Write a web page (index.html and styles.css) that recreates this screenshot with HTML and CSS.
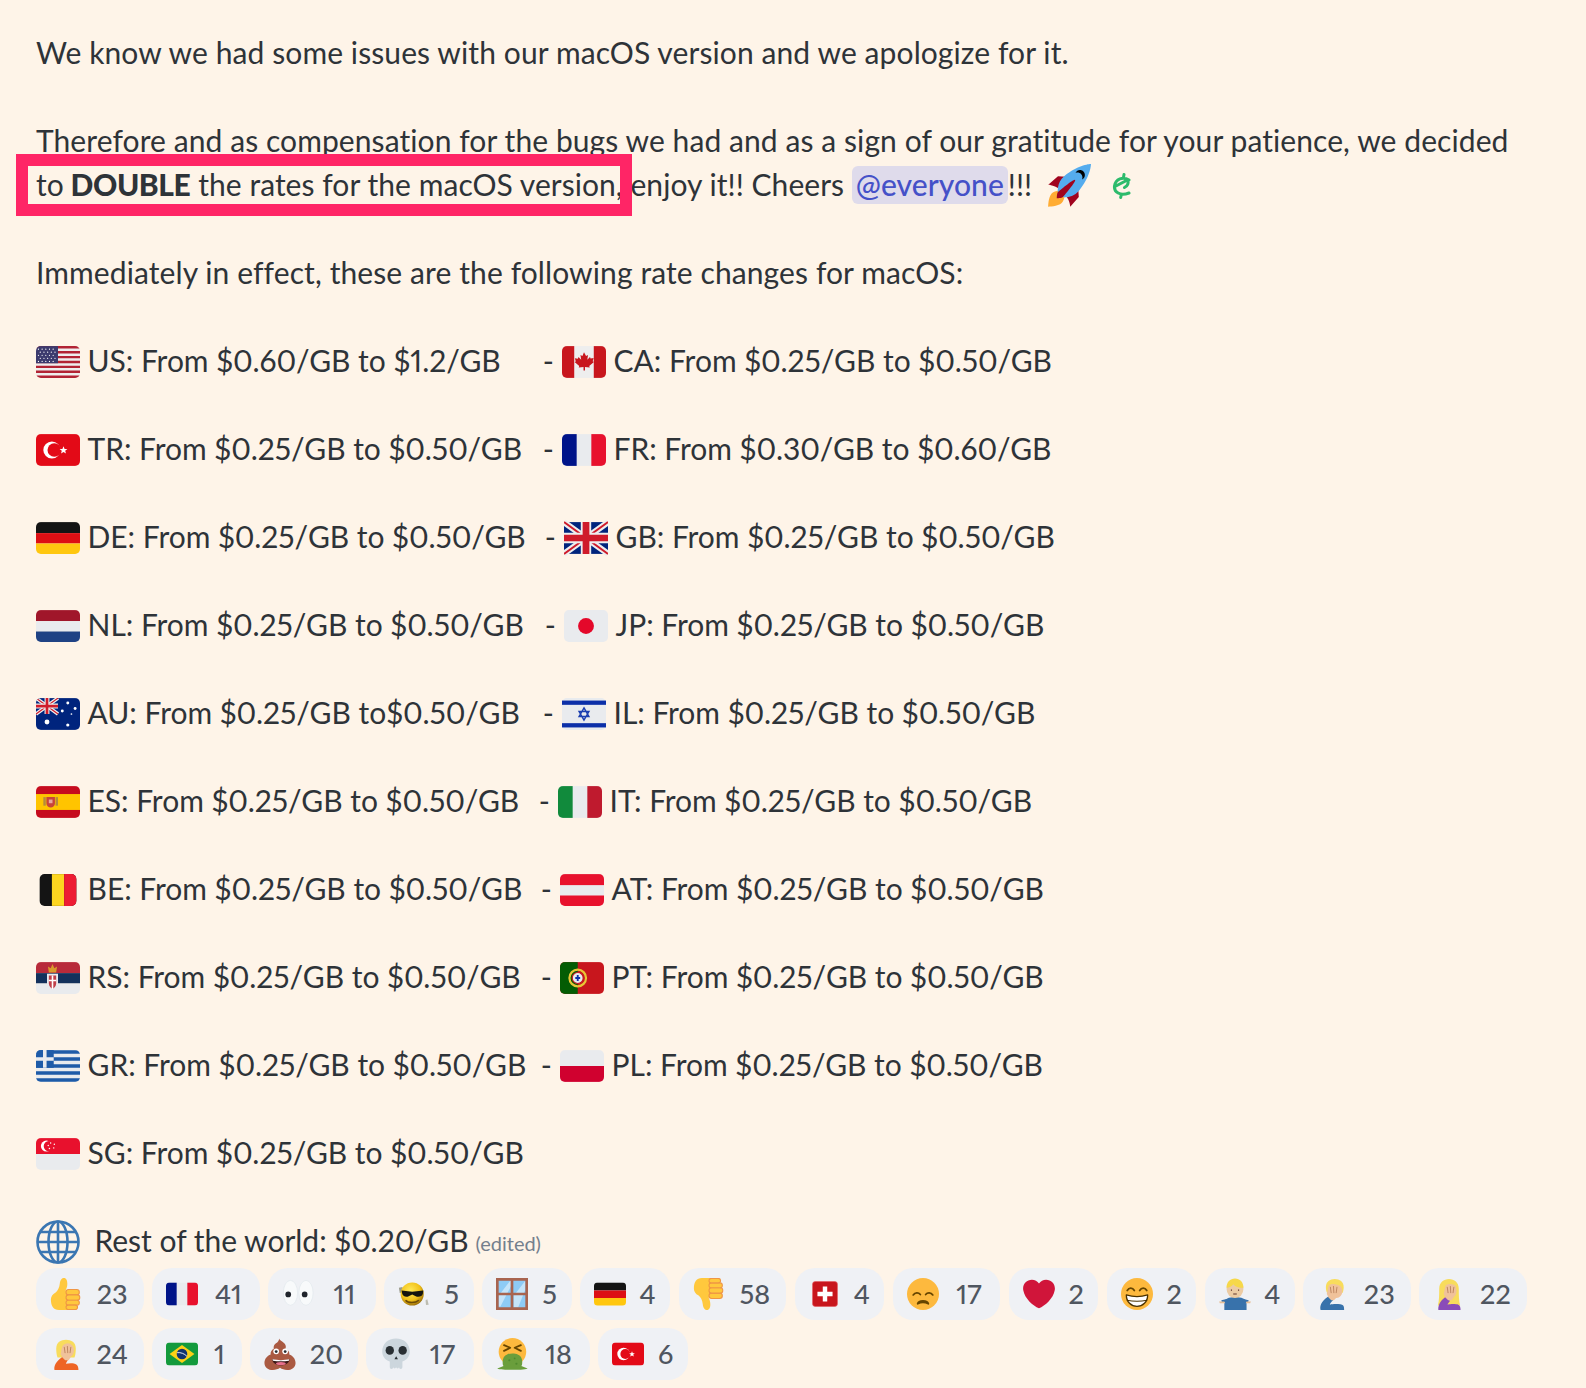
FILE: index.html
```html
<!DOCTYPE html>
<html lang="en">
<head>
<meta charset="utf-8">
<title>Message</title>
<link rel="stylesheet" href="styles.css">
</head>
<body>
<svg class="sprite" aria-hidden="true">
<defs>
<clipPath id="fc"><rect x="0" y="5" width="36" height="26" rx="4"/></clipPath>
<radialGradient id="sun" cx=".42" cy=".35" r=".7"><stop offset="0" stop-color="#ffe95a"/><stop offset=".6" stop-color="#f2c21a"/><stop offset="1" stop-color="#8f6306"/></radialGradient>

<symbol id="f-us" viewBox="0 0 36 36"><g clip-path="url(#fc)"><rect y="5" width="36" height="26" fill="#eee"/><path d="M0 6h36M0 10h36M0 14h36M0 18h36M0 22h36M0 26h36M0 30h36" stroke="#b22334" stroke-width="2"/><rect y="5" width="18" height="14" fill="#3c3b6e"/><path d="M2 7.5h15M3.5 10h13M2 12.5h15M3.5 15h13M2 17.5h15" stroke="#fff" stroke-width="1" stroke-linecap="round" stroke-dasharray=".01 3"/></g></symbol>

<symbol id="f-ca" viewBox="0 0 36 36"><g clip-path="url(#fc)"><rect y="5" width="36" height="26" fill="#eee"/><rect y="5" width="10" height="26" fill="#c8161d"/><rect x="26" y="5" width="10" height="26" fill="#c8161d"/><path d="M18 10l1.7 3 1.6-.8-.6 3.9 2.2-2.2.5 1.3 2.5-.4-.8 2.6 1 .6-3.8 3.2.4 1.3-3.9-.5V25h-1.2v-2.9l-3.9.5.4-1.3-3.8-3.2 1-.6-.8-2.6 2.5.4.5-1.3 2.2 2.2-.6-3.9 1.6.8z" fill="#c8161d"/></g></symbol>

<symbol id="f-tr" viewBox="0 0 36 36"><g clip-path="url(#fc)"><rect y="5" width="36" height="26" fill="#e30a17"/><circle cx="13" cy="18" r="7" fill="#fff"/><circle cx="15" cy="18" r="5.6" fill="#e30a17"/><path d="M22.5 15l.9 2.2 2.3-.1-1.8 1.5.6 2.3-2-1.3-2 1.3.6-2.3-1.8-1.5 2.3.1z" fill="#fff"/></g></symbol>

<symbol id="f-fr" viewBox="0 0 36 36"><g clip-path="url(#fc)"><rect y="5" width="36" height="26" fill="#e9ebee"/><rect y="5" width="12" height="26" fill="#001489"/><rect x="24" y="5" width="12" height="26" fill="#e8112d"/></g></symbol>

<symbol id="f-de" viewBox="0 0 36 36"><g clip-path="url(#fc)"><rect y="5" width="36" height="9" fill="#141414"/><rect y="14" width="36" height="8.5" fill="#dd0f14"/><rect y="22.5" width="36" height="9" fill="#ffc70f"/></g></symbol>

<symbol id="f-gb" viewBox="0 0 36 36"><rect y="5" width="36" height="26" fill="#00247d"/><path d="M0 5l36 26M36 5L0 31" stroke="#eee" stroke-width="5"/><path d="M0 5l36 26M36 5L0 31" stroke="#cf1b2b" stroke-width="1.6"/><path d="M18 5v26M0 18h36" stroke="#eee" stroke-width="8.5"/><path d="M18 5v26M0 18h36" stroke="#cf1b2b" stroke-width="5.5"/></symbol>

<symbol id="f-nl" viewBox="0 0 36 36"><g clip-path="url(#fc)"><rect y="5" width="36" height="9" fill="#a0162a"/><rect y="14" width="36" height="8.5" fill="#e9ebee"/><rect y="22.5" width="36" height="9" fill="#1f4284"/></g></symbol>

<symbol id="f-jp" viewBox="0 0 36 36"><rect y="5" width="36" height="26" rx="4" fill="#e9ebee"/><circle cx="18" cy="18" r="6.5" fill="#e4082a"/></symbol>

<symbol id="f-au" viewBox="0 0 36 36"><g clip-path="url(#fc)"><rect y="5" width="36" height="26" fill="#00247d"/><path d="M0 5l18 13M18 5L0 18" stroke="#eee" stroke-width="3"/><path d="M0 5l18 13M18 5L0 18" stroke="#cf1b2b" stroke-width="1"/><path d="M9 5v13M0 11.5h18" stroke="#eee" stroke-width="4"/><path d="M9 5v13M0 11.5h18" stroke="#cf1b2b" stroke-width="2.2"/><g fill="#fff"><circle cx="9" cy="24.5" r="2"/><circle cx="26" cy="9" r="1.2"/><circle cx="26" cy="27" r="1.3"/><circle cx="21.5" cy="15.5" r="1.2"/><circle cx="32" cy="13.5" r="1.2"/><circle cx="29" cy="18" r=".7"/></g></g></symbol>

<symbol id="f-il" viewBox="0 0 36 36"><rect y="5" width="36" height="26" rx="4" fill="#e9ebee"/><rect y="7" width="36" height="3.5" fill="#0b2fa8"/><rect y="25.5" width="36" height="3.5" fill="#0b2fa8"/><path d="M18 13l4 7h-8zM18 23l-4-7h8z" fill="none" stroke="#1c3fb0" stroke-width="1.2"/></symbol>

<symbol id="f-es" viewBox="0 0 36 36"><g clip-path="url(#fc)"><rect y="5" width="36" height="26" fill="#c60b1e"/><rect y="11.5" width="36" height="13" fill="#ffc400"/><rect x="6" y="14" width="2" height="7" fill="#b58b3c"/><rect x="16" y="14" width="2" height="7" fill="#b58b3c"/><path d="M8.5 14h7v5a3.5 3.5 0 0 1-7 0z" fill="#c8443a"/><rect x="10.5" y="16" width="3" height="3" fill="#e8a7a0"/></g></symbol>

<symbol id="f-it" viewBox="0 0 36 36"><g clip-path="url(#fc)"><rect y="5" width="36" height="26" fill="#e9ebee"/><rect y="5" width="12" height="26" fill="#118a3c"/><rect x="24" y="5" width="12" height="26" fill="#bf1a2e"/></g></symbol>

<symbol id="f-be" viewBox="0 0 36 36"><rect x="3" y="5" width="30" height="26" rx="4" fill="#141414"/><rect x="13" y="5" width="10" height="26" fill="#fdd520"/><path d="M23 5h6a4 4 0 0 1 4 4v18a4 4 0 0 1-4 4h-6z" fill="#ed1c33"/></symbol>

<symbol id="f-at" viewBox="0 0 36 36"><g clip-path="url(#fc)"><rect y="5" width="36" height="26" fill="#e9ebee"/><rect y="5" width="36" height="9" fill="#e8112d"/><rect y="22.5" width="36" height="9" fill="#e8112d"/></g></symbol>

<symbol id="f-rs" viewBox="0 0 36 36"><g clip-path="url(#fc)"><rect y="5" width="36" height="9" fill="#b82a3a"/><rect y="14" width="36" height="8.5" fill="#13315c"/><rect y="22.5" width="36" height="9" fill="#e9ebee"/><path d="M9 14.5h9v8c0 3-2.5 5-4.5 6-2-1-4.5-3-4.5-6z" fill="#e9ebee"/><path d="M10.5 16h6v6.5c0 2-1.5 3.5-3 4.5-1.5-1-3-2.5-3-4.5z" fill="#c0404a"/><path d="M13.5 16v11M10.5 20h6" stroke="#fff" stroke-width="1.3"/><path d="M10.5 13.5l-.7-5 2.2 1.5 1.5-3.5 1.5 3.5 2.2-1.5-.7 5z" fill="#d99a2c"/></g></symbol>

<symbol id="f-pt" viewBox="0 0 36 36"><g clip-path="url(#fc)"><rect y="5" width="36" height="26" fill="#c8161d"/><rect y="5" width="14.5" height="26" fill="#045c04"/><circle cx="14.5" cy="18" r="6.8" fill="none" stroke="#e8c636" stroke-width="1.8"/><circle cx="14.5" cy="18" r="4.5" fill="#e9ebee" stroke="#c8161d" stroke-width="1"/><path d="M14.5 15.5v5M12.5 18h4" stroke="#0b2fa8" stroke-width="1.5"/></g></symbol>

<symbol id="f-gr" viewBox="0 0 36 36"><g clip-path="url(#fc)"><rect y="5" width="36" height="26" fill="#e9ebee"/><path d="M0 6.5h36M0 12.3h36M0 18h36M0 23.8h36M0 29.5h36" stroke="#1e5ba8" stroke-width="2.9"/><rect y="5" width="14.5" height="14.5" fill="#1e5ba8"/><path d="M7.2 5v14.5M0 12.2h14.5" stroke="#e9ebee" stroke-width="2.9"/></g></symbol>

<symbol id="f-pl" viewBox="0 0 36 36"><g clip-path="url(#fc)"><rect y="5" width="36" height="13" fill="#e9ebee"/><rect y="18" width="36" height="13" fill="#d0012f"/></g></symbol>

<symbol id="f-sg" viewBox="0 0 36 36"><g clip-path="url(#fc)"><rect y="18" width="36" height="13" fill="#e9ebee"/><rect y="5" width="36" height="13" fill="#e8112d"/><circle cx="8.5" cy="11.5" r="4.5" fill="#fff"/><circle cx="10.5" cy="11.5" r="4.2" fill="#e8112d"/><g fill="#fff"><circle cx="12" cy="9" r=".6"/><circle cx="15" cy="10" r=".6"/><circle cx="14.5" cy="13" r=".6"/><circle cx="11" cy="13.5" r=".6"/><circle cx="10" cy="11" r=".6"/></g></g></symbol>

<symbol id="f-br" viewBox="0 0 36 36"><g clip-path="url(#fc)"><rect y="5" width="36" height="26" fill="#139a3c"/><path d="M18 8l14 10-14 10L4 18z" fill="#fcd116"/><circle cx="18" cy="18" r="6" fill="#12336f"/><path d="M12.5 16.5c4-.5 8 1 11 4" fill="none" stroke="#fff" stroke-width="1"/></g></symbol>

<symbol id="f-ch" viewBox="0 0 36 36"><rect x="4" y="4" width="28" height="28" rx="3" fill="#c8161d" stroke="#e45a5f" stroke-width=".7"/><path d="M15.5 9.5h5v6h6v5h-6v6h-5v-6h-6v-5h6z" fill="#fff"/></symbol>

<symbol id="e-thumb" viewBox="0 0 36 36"><path d="M1 24c0-3 2-6 5-7.500 3-2 4.500-6 5-10 .3-3.500 2-6.500 4.500-6.500 3 0 4 3 4 6.500 0 3-1 5.500-2 7.500h12v22H10c-6 0-9-4-9-12z" fill="#ffc83d"/><g fill="#ffc83d" stroke="#ef9645" stroke-width="1.200"><rect x="18" y="13" width="15" height="6" rx="3"/><rect x="18" y="19" width="15.500" height="6" rx="3"/><rect x="18" y="25" width="15" height="5.500" rx="2.700"/><rect x="18" y="30.500" width="13" height="5" rx="2.500"/></g></symbol>

<symbol id="e-down" viewBox="0 0 36 36"><g transform="matrix(1 0 0 -1 0 36)"><use href="#e-thumb" width="36" height="36"/></g></symbol>

<symbol id="e-eyes" viewBox="0 0 36 36"><ellipse cx="9.5" cy="16.7" rx="8" ry="14" fill="#f8fafb" stroke="#e1e8ed" stroke-width=".8"/><ellipse cx="27" cy="16.7" rx="8" ry="14" fill="#f8fafb" stroke="#e1e8ed" stroke-width=".8"/><circle cx="7" cy="18.5" r="3.2" fill="#20242c"/><circle cx="25.5" cy="18.5" r="3.2" fill="#20242c"/></symbol>

<symbol id="e-cool" viewBox="0 0 36 36"><path d="M1 11l4-1 1 6-4 1z" fill="#9a9a8c"/><path d="M31 25l2-1 1.5 6-3 .5z" fill="#bcbcb0"/><circle cx="16" cy="18" r="13" fill="url(#sun)"/><path d="M4 14l12 1.500L28.500 14l-.5 3.500c-.5 3.500-5.500 4.500-8 3l-4-2-4 2c-3 1.500-7 0-7.500-3.500z" fill="#15150f"/><path d="M8.500 25c3 3.500 11 3.500 15 0" fill="none" stroke="#6b4a06" stroke-width="1.600"/></symbol>

<symbol id="e-window" viewBox="0 0 36 36"><rect x="1.5" y="1.5" width="33" height="33" fill="#8ecbf5"/><path d="M3 20L16 3h2v4L5 32H3zM20 20L33 3v10L25 33h-5z" fill="#c5e4f9"/><path d="M1.5 1.5h33v33h-33zM18 1.5v33M1.5 18h33" fill="none" stroke="#a8644f" stroke-width="3"/></symbol>

<symbol id="e-sad" viewBox="0 0 36 36"><circle cx="18" cy="18" r="18" fill="#fdb93e"/><path d="M7 19c2-3 6-3 8-.5M21 18.500c2-2.500 6-2.500 8 .5M12 29c1-4.500 11-4.500 12 0-3.500-2-8.500-2-12 0z" fill="none" stroke="#664500" stroke-width="2" stroke-linecap="round" stroke-linejoin="round"/></symbol>

<symbol id="e-heart" viewBox="0 0 36 36"><path d="M35.885 11.833c0-5.45-4.418-9.868-9.867-9.868-3.308 0-6.227 1.633-8.018 4.129-1.791-2.496-4.71-4.129-8.017-4.129-5.45 0-9.868 4.417-9.868 9.868 0 .772.098 1.52.266 2.241C1.751 22.587 11.216 31.568 18 34.034c6.783-2.466 16.249-11.447 17.617-19.959.17-.721.268-1.469.268-2.242z" fill="#d0153a"/></symbol>

<symbol id="e-grin" viewBox="0 0 36 36"><circle cx="18" cy="18" r="18" fill="#fdb93e"/><path d="M7 14c2-3.500 6-3.500 8 0M21 14c2-3.500 6-3.500 8 0" fill="none" stroke="#664500" stroke-width="2" stroke-linecap="round"/><path d="M6 19c8 2.500 16 2.500 24 0 0 8-5.500 13-12 13S6 27 6 19z" fill="#fff" stroke="#4a3200" stroke-width="1.500" stroke-linejoin="round"/><path d="M6.500 25c7 1.500 16 1.500 23 0" fill="none" stroke="#4a3200" stroke-width="1.200"/></symbol>

<symbol id="e-shrug" viewBox="0 0 36 36"><path d="M6 36V27c0-3 5-5.500 12-5.500S31 24 31 27v9z" fill="#3872ab"/><path d="M9 25l-6 1.500M27 25l6 1.500" stroke="#3872ab" stroke-width="3"/><path d="M0 26.500h6l1 1.800H1zM30 28.300l1-1.800h5l-1 1.800z" fill="#e8bf97"/><ellipse cx="18" cy="12.500" rx="9.500" ry="10" fill="#eccba3"/><path d="M8.500 11c3 0 6-1.500 7.500-4 2.500 3 6 4 11.500 4C27.500 4.500 23.500.5 18 .5S8.500 4.500 8.500 11z" fill="#f6d84a"/><path d="M14 13v1.400M22 13v1.400M16 18h4" stroke="#60352a" stroke-width="1.300"/></symbol>

<symbol id="e-palm-o" viewBox="0 0 36 36"><path d="M7 12C7 5 12 2 18 2S29 5 29 12c0 4-.5 7-1.500 10H8.500C7.500 19 7 16 7 12z" fill="#f8dc5c"/><ellipse cx="20" cy="14" rx="7" ry="8" fill="#f0c29a"/><path d="M5 36c-1-6 4-12 11-16l4 5c-1 1.500-2 3-2 4 4-1 9-1 12 1 1.500 1.500 2 3.500 2 6z" fill="#ee6425"/><path d="M14 22l-2-4 2-9c2-3 10-3 12 1l-3 12-2 3h-4z" fill="#f0c29a"/><path d="M16 10l1 7M19.500 9l.5 8M23.500 10l-1 7" stroke="#b9805a" stroke-width="1"/></symbol>

<symbol id="e-palm-b" viewBox="0 0 36 36"><path d="M10 10c0-6 4.500-9 10-9s10 3 10 9c0 3-.5 5-1.500 7h-17C10.500 15 10 13 10 10z" fill="#f8dc5c"/><ellipse cx="22" cy="15" rx="6.500" ry="7.500" fill="#f0c29a"/><path d="M4 36c-1.500-6 3-12 10-16l4 5c-2 2-3.500 3.500-3.500 5 4-1 13-1 15 1 1 1.500 1 3 1 5z" fill="#3872ab"/><path d="M13 22l-2-4 2-9c2-3 10-3 12 1l-3 12-3 3h-3z" fill="#f0c29a"/><path d="M15 10l1 7M18.500 9l.5 8M22.500 10l-1 7" stroke="#b9805a" stroke-width="1"/></symbol>

<symbol id="e-palm-p" viewBox="0 0 36 36"><path d="M7 12C7 5 12 1 18 1s11 4 11 11c0 7 0 13 1.500 19H5.500C7 25 7 19 7 12z" fill="#f8dc5c"/><ellipse cx="20" cy="15" rx="6.500" ry="7.500" fill="#f0c29a"/><path d="M6 36c-.5-6 3-12 9-15l4 5c-1 1.500-2.500 3-2.500 4 3-1 9.500-1 12 0 2 1 2.500 3 2.500 6z" fill="#8a4cb8"/><path d="M14 22l-2-4 2-9c2-3 10-3 12 1l-3 12-2 3h-4z" fill="#f0c29a"/><path d="M16 10l1 7M19.500 9l.5 8M23.500 10l-1 7" stroke="#b9805a" stroke-width="1"/></symbol>

<symbol id="e-poop" viewBox="0 0 36 36"><path d="M17 .5c1 3 5 3 7 7 1 2 .5 3.500 0 4.500 3 1 5 3.500 4.500 6.500 4 1.500 7 5 7 9.500 0 5-4.500 8-9.500 8-3 0-6-1-8-2.500-2 1.500-5 2.500-8 2.500C5 36 .5 33 .5 28c0-4.500 3-8 7-9.500-.5-3 1-5 3.500-6.500-.5-2.500.5-4.500 2.500-6 2-1.500 3.500-3 3.500-5.500z" fill="#aa5a42"/><circle cx="13.700" cy="15" r="3.200" fill="#fff"/><circle cx="23.800" cy="15" r="3.200" fill="#fff"/><circle cx="13.700" cy="15.300" r="1.600" fill="#292f33"/><circle cx="23.800" cy="15.300" r="1.600" fill="#292f33"/><path d="M9 24c6 1.300 14 1.300 20 0-1 4.500-5 7-10 7s-9-2.500-10-7z" fill="#3d1a18"/><path d="M9.500 24c6 1.200 13 1.200 19 0l-.5 1.500c-5.500 1-12.500 1-18 0z" fill="#fff"/><ellipse cx="19" cy="28.800" rx="5.500" ry="1.900" fill="#e8718d"/></symbol>

<symbol id="e-skull" viewBox="0 0 36 36"><path d="M18 .5C9 .5 2.500 6.500 2.500 15c0 5 2.500 9.500 8.500 11.500V33a1.900 1.900 0 0 0 3.800 0 1.700 1.700 0 0 0 3.300 0 1.700 1.700 0 0 0 3.300 0 1.900 1.900 0 0 0 3.800 0v-6.500C31 24.500 33.500 20 33.500 15 33.500 6.500 27 .5 18 .5z" fill="#ccd6dd"/><ellipse cx="11" cy="14" rx="4.700" ry="4.900" fill="#292f33"/><ellipse cx="25.500" cy="14" rx="4.700" ry="4.900" fill="#292f33"/><path d="M18.200 20.500l2 3.500h-4z" fill="#292f33"/></symbol>

<symbol id="e-vomit" viewBox="0 0 36 36"><circle cx="18.500" cy="15.500" r="15.500" fill="#fdb93e"/><path d="M9 8l7 3-7 3.500M28 8l-7 3 7 3.500" fill="none" stroke="#664500" stroke-width="2" stroke-linecap="round" stroke-linejoin="round"/><path d="M12.500 18.500c3-1.500 9-1.500 12 0 3 1 5 4 5 8 0 2.500 0 4-1 5l7 2.800c0 2-34 2-34 0l7-2.800c-1-1-1-2.500-1-5 0-4 2-7 5-8z" fill="#6a9e3c"/><g fill="#4f8a2d"><circle cx="15" cy="25" r="1.200"/><circle cx="21" cy="23" r="1"/><circle cx="23" cy="29" r="1.200"/></g></symbol>

<symbol id="e-rocket" viewBox="0 0 36 36"><path fill="#a0041e" d="M1 17l8-7 16 1 1 16-7 8s.001-5.999-6-12-12-6-12-6z"/><path fill="#ffac33" d="M.973 35s-.036-7.979 2.985-11S15 21.187 15 21.187 14.999 29 11.999 32c-3 3-11.026 3-11.026 3z"/><path fill="#ffcc4d" d="M8.999 27.500s-.5-3 .5-5 5-2.500 5-2.500-.5 4-1.500 5-4 2.500-4 2.500z"/><path fill="#55acee" d="M35.999 0s-10 0-22 10c-6 5-6 14-4 16s11 2 16-4c10-12 10-22 10-22z"/><path fill="#000" d="M26.999 5c-1.623 0-3.013.971-3.641 2.36.502-.227 1.055-.36 1.641-.36 2.209 0 4 1.791 4 4 0 .586-.133 1.139-.359 1.64 1.389-.627 2.359-2.017 2.359-3.64 0-2.209-1.791-4-4-4z"/><path fill="#a0041e" d="M8 28s0-4 1-5 13.001-10.999 14-10-9.001 13-10.001 14S8 28 8 28z"/></symbol>

<symbol id="e-globe" viewBox="0 0 44 44"><g fill="none" stroke="#3b76b2" stroke-width="2.6"><circle cx="22" cy="22" r="20.5"/><ellipse cx="22" cy="22" rx="9.5" ry="20.5"/><path d="M22 1.5v41M1.5 22h41M4.5 12h35M4.5 32h35"/></g></symbol>
</defs>
</svg>

<main class="message">
  <p class="line">We know we had some issues with our macOS version and we apologize for it.</p>
  <div class="blank"></div>
  <p class="line tight">Therefore and as compensation for the bugs we had and as a sign of our gratitude for your patience, we decided</p>
  <p class="line tighter">to <strong class="strong">DOUBLE</strong> the rates for the macOS version, enjoy it!! Cheers <span class="mention">@everyone</span>!!! <svg class="inline-emoji rocket"><use href="#e-rocket"/></svg><svg class="cent" viewBox="0 0 20 26"><path d="M17 7C11 3 3.500 6 2.500 13c-.7 6 5.500 10.500 14.500 7M3 13.500l12.500-6.500c1.500 3 0 6-3 7.500M12 1.500l-.6 3.500M9.300 21.500l-.6 3" fill="none" stroke="#2dbb6c" stroke-width="3" stroke-linecap="round"/></svg></p>
  <div class="blank"></div>
  <p class="line">Immediately in effect, these are the following rate changes for macOS:</p>
  <div class="blank"></div>

  <div class="row"><div class="left at-562"><svg class="flag"><use href="#f-us"/></svg><span>US: From $0.60/GB to $1.2/GB</span><span class="dash">-</span></div><svg class="flag"><use href="#f-ca"/></svg><span>CA: From $0.25/GB to $0.50/GB</span></div>
  <div class="row"><div class="left at-562"><svg class="flag"><use href="#f-tr"/></svg><span>TR: From $0.25/GB to $0.50/GB</span><span class="dash">-</span></div><svg class="flag"><use href="#f-fr"/></svg><span>FR: From $0.30/GB to $0.60/GB</span></div>
  <div class="row"><div class="left at-564"><svg class="flag"><use href="#f-de"/></svg><span>DE: From $0.25/GB to $0.50/GB</span><span class="dash">-</span></div><svg class="flag"><use href="#f-gb"/></svg><span>GB: From $0.25/GB to $0.50/GB</span></div>
  <div class="row"><div class="left at-564"><svg class="flag"><use href="#f-nl"/></svg><span>NL: From $0.25/GB to $0.50/GB</span><span class="dash">-</span></div><svg class="flag"><use href="#f-jp"/></svg><span>JP: From $0.25/GB to $0.50/GB</span></div>
  <div class="row"><div class="left at-562"><svg class="flag"><use href="#f-au"/></svg><span>AU: From $0.25/GB to$0.50/GB</span><span class="dash">-</span></div><svg class="flag"><use href="#f-il"/></svg><span>IL: From $0.25/GB to $0.50/GB</span></div>
  <div class="row"><div class="left at-558"><svg class="flag"><use href="#f-es"/></svg><span>ES: From $0.25/GB to $0.50/GB</span><span class="dash">-</span></div><svg class="flag"><use href="#f-it"/></svg><span>IT: From $0.25/GB to $0.50/GB</span></div>
  <div class="row"><div class="left at-560"><svg class="flag"><use href="#f-be"/></svg><span>BE: From $0.25/GB to $0.50/GB</span><span class="dash">-</span></div><svg class="flag"><use href="#f-at"/></svg><span>AT: From $0.25/GB to $0.50/GB</span></div>
  <div class="row"><div class="left at-560"><svg class="flag"><use href="#f-rs"/></svg><span>RS: From $0.25/GB to $0.50/GB</span><span class="dash">-</span></div><svg class="flag"><use href="#f-pt"/></svg><span>PT: From $0.25/GB to $0.50/GB</span></div>
  <div class="row"><div class="left at-560"><svg class="flag"><use href="#f-gr"/></svg><span>GR: From $0.25/GB to $0.50/GB</span><span class="dash">-</span></div><svg class="flag"><use href="#f-pl"/></svg><span>PL: From $0.25/GB to $0.50/GB</span></div>
  <div class="row"><div class="left at-562"><svg class="flag"><use href="#f-sg"/></svg><span>SG: From $0.25/GB to $0.50/GB</span></div></div>

  <div class="row rest"><svg class="flag"><use href="#e-globe"/></svg><span class="rest-text">Rest of the world: $0.20/GB</span><span class="edited">(edited)</span></div>

  <div class="reactions">
    <div class="pill"><svg class="emoji"><use href="#e-thumb"/></svg><span class="count two">23</span></div>
    <div class="pill"><svg class="emoji"><use href="#f-fr"/></svg><span class="count two">41</span></div>
    <div class="pill"><svg class="emoji"><use href="#e-eyes"/></svg><span class="count two">11</span></div>
    <div class="pill"><svg class="emoji"><use href="#e-cool"/></svg><span class="count">5</span></div>
    <div class="pill"><svg class="emoji"><use href="#e-window"/></svg><span class="count">5</span></div>
    <div class="pill"><svg class="emoji"><use href="#f-de"/></svg><span class="count">4</span></div>
    <div class="pill"><svg class="emoji"><use href="#e-down"/></svg><span class="count two">58</span></div>
    <div class="pill"><svg class="emoji"><use href="#f-ch"/></svg><span class="count">4</span></div>
    <div class="pill"><svg class="emoji"><use href="#e-sad"/></svg><span class="count two">17</span></div>
    <div class="pill"><svg class="emoji"><use href="#e-heart"/></svg><span class="count">2</span></div>
    <div class="pill"><svg class="emoji"><use href="#e-grin"/></svg><span class="count">2</span></div>
    <div class="pill"><svg class="emoji"><use href="#e-shrug"/></svg><span class="count">4</span></div>
    <div class="pill"><svg class="emoji"><use href="#e-palm-b"/></svg><span class="count two">23</span></div>
    <div class="pill"><svg class="emoji"><use href="#e-palm-p"/></svg><span class="count two">22</span></div>
    <div class="pill"><svg class="emoji"><use href="#e-palm-o"/></svg><span class="count two">24</span></div>
    <div class="pill"><svg class="emoji"><use href="#f-br"/></svg><span class="count">1</span></div>
    <div class="pill"><svg class="emoji"><use href="#e-poop"/></svg><span class="count two">20</span></div>
    <div class="pill"><svg class="emoji"><use href="#e-skull"/></svg><span class="count two">17</span></div>
    <div class="pill"><svg class="emoji"><use href="#e-vomit"/></svg><span class="count two">18</span></div>
    <div class="pill"><svg class="emoji"><use href="#f-tr"/></svg><span class="count">6</span></div>
  </div>
</main>
<div class="highlight"></div>
</body>
</html>
```
FILE: styles.css
```css
* { box-sizing: border-box; }
html, body { margin: 0; padding: 0; }
body {
  width: 1586px;
  height: 1388px;
  overflow: hidden;
  background: #fef4e8;
  color: #2e3338;
  font-family: "Lato", "Open Sans", sans-serif;
  font-size: 30px;
  line-height: 40px;
  letter-spacing: .1px;
  font-variant-numeric: proportional-nums;
  position: relative;
}
.sprite { position: absolute; width: 0; height: 0; }
.message { padding: 32px 36px 0; }
.line { margin: 0; height: 44px; white-space: nowrap; }
.tight { letter-spacing: .08px; }
.tighter { letter-spacing: .05px; }
.blank { height: 44px; }
.strong { font-weight: 900; letter-spacing: -.4px; margin-left: -1px; }
.mention {
  display: inline-block;
  height: 38px;
  line-height: 36px;
  vertical-align: top;
  margin-top: 2px;
  padding: 0 4px;
  border-radius: 6px;
  background: #dfdbeb;
  color: #4551c8;
  font-weight: 500;
}
.inline-emoji { width: 44px; height: 44px; vertical-align: top; }
.rocket { margin-left: 7px; }
.cent { width: 20px; height: 26px; vertical-align: top; margin: 9px 0 0 21px; }
.row {
  display: flex;
  align-items: flex-start;
  height: 44px;
  margin-bottom: 44px;
  white-space: nowrap;
  letter-spacing: -.02px;
}
.left { display: flex; align-items: flex-start; flex: none; }
.at-562 { width: 526px; }
.at-564 { width: 528px; }
.at-558 { width: 522px; }
.at-560 { width: 524px; }
.flag { width: 44px; height: 44px; flex: none; margin-right: 7.5px; }
.dash { margin-left: auto; margin-right: 8px; }
.rest { margin-bottom: 4px; }
.rest-text { margin-left: 7px; }
.edited { font-size: 20px; color: #747f8d; margin-left: 7px; margin-top: 3px; }
.reactions { display: flex; flex-wrap: wrap; gap: 8px 8.6px; }
.pill {
  display: flex;
  align-items: center;
  height: 52px;
  padding: 0 9px 0 14px;
  border-radius: 20px;
  background: #eff1f5;
}
.emoji { width: 32px; height: 32px; flex: none; }
.count {
  width: 26.5px;
  margin-left: 8px;
  text-align: center;
  font-size: 27px;
  font-weight: 500;
  color: #4f5660;
}
.count.two { width: 44.5px; }
.highlight {
  position: absolute;
  left: 16px;
  top: 154px;
  width: 616px;
  height: 62px;
  border: 12px solid #ff2566;
  pointer-events: none;
}
```
